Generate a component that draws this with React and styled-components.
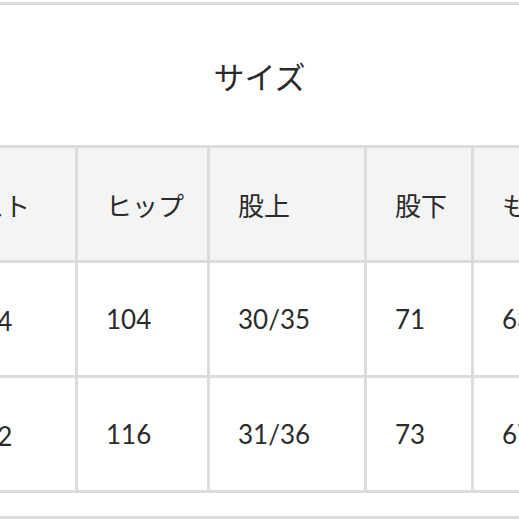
import React from "react";
import styled, { createGlobalStyle } from "styled-components";

const COLORS = {
  text: "#2b2b2b",
  border: "#dcdcdc",
  headBg: "#f4f4f4",
};

const columns = ["ウエスト", "ヒップ", "股上", "股下", "もも周り"];
const rows = [
  ["76〜84", "104", "30/35", "71", "63"],
  ["84〜92", "116", "31/36", "73", "67"],
];

const GlobalStyle = createGlobalStyle`
  body {
    margin: 0;
    background: #fff;
    font-family: "Lato", "Noto Sans CJK JP", sans-serif;
    color: ${COLORS.text};
  }
`;

const Page = styled.div`
  width: 519px;
  height: 519px;
  overflow: hidden;
  display: flex;
  flex-direction: column;
`;

const TopRule = styled.div`
  margin-top: 2px;
  height: 3px;
  background: ${COLORS.border};
`;

const Title = styled.h2`
  margin: 0;
  height: 141px;
  display: flex;
  align-items: center;
  justify-content: center;
  font-size: 31px;
  font-weight: 400;
  font-family: "Noto Sans CJK JP", sans-serif;
`;

/* the size table is wider than the view; its first column runs off the left edge */
const Table = styled.div`
  display: grid;
  grid-template-columns: 177px 129px 154px 104px 130px;
  grid-auto-rows: 112px;
  gap: 3px;
  margin-left: -102px;
  width: max-content;
  background: ${COLORS.border};
  border-top: 3px solid ${COLORS.border};
  border-bottom: 3px solid ${COLORS.border};
`;

const Cell = styled.div`
  display: flex;
  align-items: center;
  padding-left: 28px;
  font-size: 26px;
  background: ${(p) => (p.$head ? COLORS.headBg : "#fff")};
  white-space: nowrap;
`;

const BottomRule = styled.div`
  margin-top: 23px;
  height: 3px;
  background: ${COLORS.border};
`;

export default function App() {
  return (
    <>
      <GlobalStyle />
      <Page>
        <TopRule />
        <Title>サイズ</Title>
        <Table>
          {columns.map((c) => (
            <Cell key={c} $head>
              {c}
            </Cell>
          ))}
          {rows.map((r, i) =>
            r.map((v, j) => <Cell key={`${i}-${j}`}>{v}</Cell>)
          )}
        </Table>
        <BottomRule />
      </Page>
    </>
  );
}
